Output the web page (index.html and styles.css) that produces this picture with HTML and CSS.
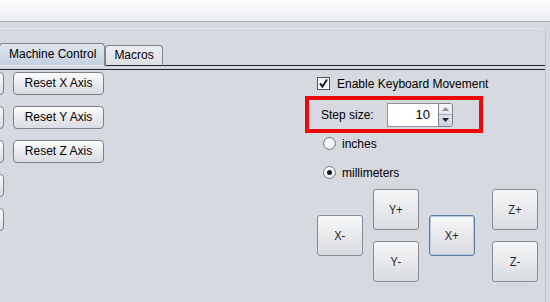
FILE: index.html
```html
<!DOCTYPE html>
<html>
<head>
<meta charset="utf-8">
<link rel="stylesheet" href="styles.css">
</head>
<body>
<div class="header"></div>
<div class="frame">
  <div class="tabs">
    <div class="tab selected">Machine Control</div>
    <div class="tab">Macros</div>
    <div class="tab-fill"></div>
  </div>
  <div class="content">
    <div class="stubs">
      <div class="btn stub"></div>
      <div class="btn stub"></div>
      <div class="btn stub"></div>
      <div class="btn stub"></div>
      <div class="btn stub"></div>
    </div>
    <div class="resets">
      <div class="btn reset">Reset X Axis</div>
      <div class="btn reset">Reset Y Axis</div>
      <div class="btn reset">Reset Z Axis</div>
    </div>
    <div class="right">
      <div class="check-row">
        <span class="checkbox"><svg width="11" height="11" viewBox="0 0 11 11"><path d="M2 5.5 L4.5 8.5 L9 1.5" fill="none" stroke="#1b1f26" stroke-width="2"/></svg></span>
        <span class="label">Enable Keyboard Movement</span>
      </div>
      <div class="step-box">
        <span class="step-label">Step size:</span>
        <div class="spinner">
          <div class="spin-field">10</div>
          <div class="spin-btns">
            <div class="spin-up"><svg width="7" height="4" viewBox="0 0 7 4"><path d="M0 4 L3.5 0 L7 4Z" fill="#8a9099"/></svg></div>
            <div class="spin-down"><svg width="7" height="4" viewBox="0 0 7 4"><path d="M0 0 L3.5 4 L7 0Z" fill="#1e2530"/></svg></div>
          </div>
        </div>
      </div>
      <div class="radio-row first">
        <span class="radio"></span>
        <span class="label">inches</span>
      </div>
      <div class="radio-row second">
        <span class="radio on"><span class="dot"></span></span>
        <span class="label">millimeters</span>
      </div>
      <div class="jog">
        <div class="jog-col"><div class="jbtn">X-</div></div>
        <div class="jog-col pair"><div class="jbtn">Y+</div><div class="jbtn">Y-</div></div>
        <div class="jog-col"><div class="jbtn focus">X+</div></div>
        <div class="jog-col pair z"><div class="jbtn">Z+</div><div class="jbtn">Z-</div></div>
      </div>
    </div>
  </div>
</div>
</body>
</html>
```
FILE: styles.css
```css
html, body {
  margin: 0;
  padding: 0;
  background: #d6d9df;
  width: 550px;
  height: 302px;
  overflow: hidden;
  font-family: "Liberation Sans", Arial, sans-serif;
  font-size: 12px;
  color: #000;
}
.header {
  height: 21px;
  background: linear-gradient(#fbfcfd, #eceef2);
  border-bottom: 1px solid #a3a7ae;
}
.frame {
  margin: 6px 4px 0 0;
  border-top: 1px solid #e3e6ea;
  border-right: 1px solid #bfc3c9;
  border-top-right-radius: 5px;
  height: 273px;
  overflow: hidden;
}
.tabs {
  display: flex;
  align-items: flex-end;
  margin-top: 14px;
  height: 23px;
}
.tab {
  box-sizing: border-box;
  height: 21px;
  line-height: 19px;
  padding: 0 8px;
  border: 1px solid #7d838c;
  border-bottom: 1px solid #1c2433;
  border-radius: 4px 4px 0 0;
  background: linear-gradient(#eceef1, #dcdfe4);
}
.tab.selected {
  height: 23px;
  line-height: 21px;
  margin-left: -1px;
  padding: 0 8px 0 9px;
  background: linear-gradient(#dfe7ef, #c3d1df);
  border-bottom: 1px solid #e9edf1;
}
.tab-fill {
  flex: 1;
  border-bottom: 1px solid #1c2433;
}
.content {
  display: flex;
  align-items: flex-start;
  margin-top: 3px;
  border-top: 1px solid #1c2433;
}
.btn {
  box-sizing: border-box;
  height: 23px;
  border: 1px solid #7b8089;
  border-radius: 4px;
  background: linear-gradient(#fdfdfd, #e6e8eb 60%, #d9dce1);
  text-align: center;
  line-height: 21px;
}
.stubs {
  display: flex;
  flex-direction: column;
  gap: 11px;
  margin-top: 2px;
  margin-left: -36px;
  width: 40px;
}
.resets {
  display: flex;
  flex-direction: column;
  gap: 11px;
  margin-top: 2px;
  margin-left: 9px;
  width: 91px;
}
.right {
  margin-left: 201px;
  width: 178px;
}
.check-row {
  display: flex;
  align-items: center;
  margin-top: 7px;
  margin-left: 12px;
  height: 13px;
}
.checkbox {
  box-sizing: border-box;
  width: 13px;
  height: 13px;
  border: 1px solid #4e545c;
  background: linear-gradient(#f2f3f5, #ffffff);
  display: flex;
  align-items: center;
  justify-content: center;
  margin-right: 7px;
}
.step-box {
  box-sizing: border-box;
  margin-top: 6px;
  height: 37px;
  width: 178px;
  border: 4px solid #ea0a0a;
  display: flex;
  align-items: center;
}
.step-label {
  padding-left: 12px;
  width: 66px;
}
.spinner {
  display: flex;
  height: 24px;
}
.spin-field {
  box-sizing: border-box;
  width: 51px;
  height: 24px;
  background: #fff;
  border: 1px solid #8e949c;
  border-right: none;
  text-align: right;
  padding-right: 8px;
  line-height: 22px;
  font-size: 13px;
}
.spin-btns {
  box-sizing: border-box;
  width: 15px;
  height: 24px;
  border: 1px solid #7b818a;
  border-radius: 0 3px 3px 0;
  display: flex;
  flex-direction: column;
  overflow: hidden;
}
.spin-up, .spin-down {
  flex: 1;
  display: flex;
  align-items: center;
  justify-content: center;
}
.spin-up {
  background: linear-gradient(#f7f8f9, #e4e6ea);
  border-bottom: 1px solid #a7acb3;
}
.spin-down {
  background: linear-gradient(#dfe4ea, #c8d1db);
}
.radio-row {
  display: flex;
  align-items: center;
  margin-left: 18px;
  height: 13px;
}
.radio-row.first { margin-top: 4px; }
.radio-row.second { margin-top: 16px; }
.radio {
  box-sizing: border-box;
  width: 13px;
  height: 13px;
  border-radius: 50%;
  border: 1px solid #767c85;
  background: radial-gradient(circle at 40% 35%, #ffffff, #dfe2e6);
  margin-right: 6px;
  display: flex;
  align-items: center;
  justify-content: center;
}
.dot {
  width: 5px;
  height: 5px;
  border-radius: 50%;
  background: #1a1e24;
}
.label {
  white-space: nowrap;
}
.jog {
  display: flex;
  align-items: center;
  margin-top: 10px;
  margin-left: 12px;
  gap: 10px;
}
.jog-col {
  display: flex;
  flex-direction: column;
  gap: 11px;
}
.jog-col.z {
  margin-left: 7px;
}
.jbtn {
  box-sizing: border-box;
  width: 46px;
  height: 41px;
  border: 1px solid #878c94;
  border-radius: 3px;
  background: linear-gradient(#f6f7f8, #e6e8eb 55%, #d9dce1);
  font-family: "Open Sans", "Noto Sans", sans-serif;
  font-size: 12px;
  color: #222;
  display: flex;
  align-items: center;
  justify-content: center;
}
.jbtn.focus {
  border-color: #5d7fa6;
  box-shadow: inset 0 0 0 1px #b6cbe0;
}
```
